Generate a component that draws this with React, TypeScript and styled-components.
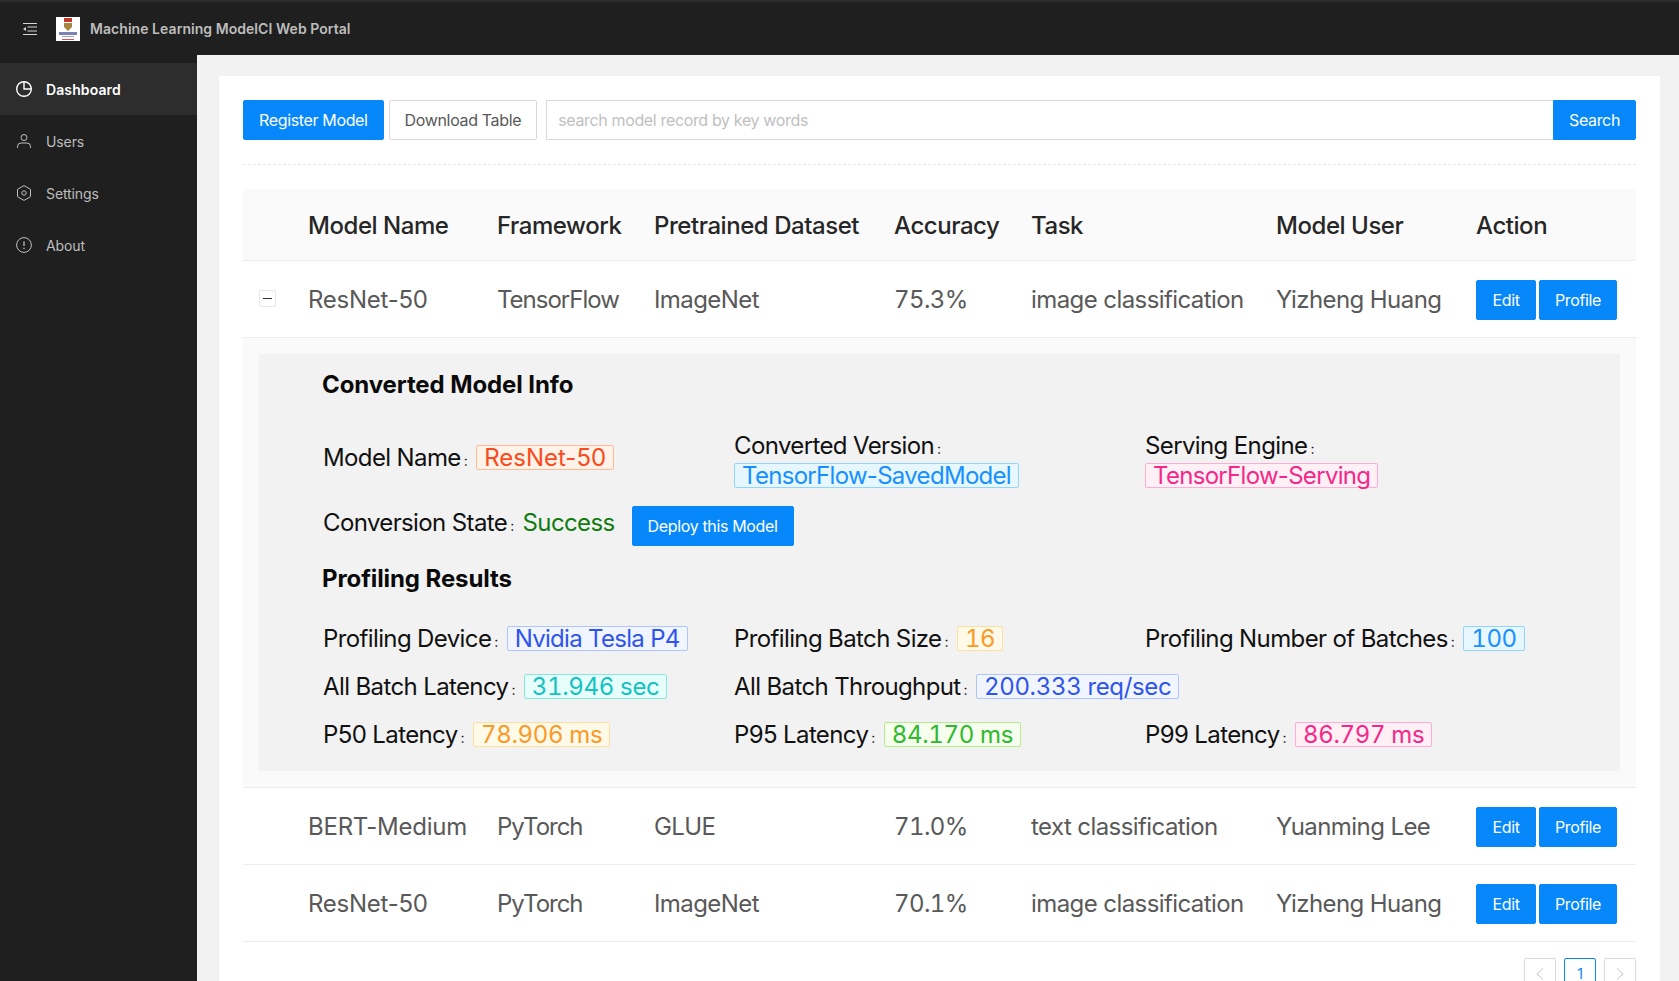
import styled, { createGlobalStyle } from "styled-components";

const GlobalStyle = createGlobalStyle`
  html, body {
    margin: 0;
    height: 100%;
    overflow: hidden;
    background: #f2f2f2;
    font-family: Inter, "Liberation Sans", sans-serif;
    font-kerning: normal;
    text-rendering: optimizeLegibility;
  }
  * {
    box-sizing: border-box;
  }
`;

const Page = styled.div`
  height: 981px;
  overflow: hidden;
  display: flex;
  flex-direction: column;
`;

const Header = styled.header`
  flex: none;
  height: 55px;
  display: flex;
  align-items: center;
  padding-left: 23px;
  background: #1f1f1f;
  border-top: 2px solid #2b2b30;
`;

const MenuFold = styled.svg`
  width: 14px;
  height: 12px;
  color: #d6d6d6;
`;

const LogoBox = styled.svg`
  width: 24px;
  height: 24px;
  margin-left: 19px;
  background: #fff;
`;

const Title = styled.div`
  margin-left: 10px;
  font-size: 14px;
  font-weight: 600;
  letter-spacing: 0.05px;
  color: #bdbdbd;
`;

const Body = styled.div`
  flex: 1;
  display: flex;
  min-height: 0;
`;

const Sider = styled.nav`
  flex: none;
  width: 197px;
  padding-top: 8px;
  background: #1f1f1f;
`;

const MenuItem = styled.div<{ $active?: boolean }>`
  height: 52px;
  display: flex;
  align-items: center;
  gap: 14px;
  padding-left: 16px;
  font-size: 14px;
  font-weight: ${(p) => (p.$active ? 600 : 400)};
  letter-spacing: ${(p) => (p.$active ? "0.1px" : "-0.1px")};
  color: ${(p) => (p.$active ? "#fff" : "#bdbdbd")};
  background: ${(p) => (p.$active ? "#2d2d2d" : "transparent")};
`;

const MenuIcon = styled.svg`
  width: 16px;
  height: 16px;
  flex: none;
`;

const Content = styled.main`
  flex: 1;
  padding: 21px 19px 0 22px;
  min-width: 0;
`;

const Card = styled.div`
  background: #fff;
  padding: 24px;
  height: 100%;
`;

const Toolbar = styled.div`
  display: flex;
  gap: 5px;
  padding-bottom: 24px;
  border-bottom: 1px dashed #e8e8e8;
  margin-bottom: 24px;
`;

const Button = styled.button<{ $ghost?: boolean }>`
  height: 40px;
  padding: 0 15px;
  flex: none;
  font-family: inherit;
  font-size: 16px;
  letter-spacing: -0.35px;
  color: ${(p) => (p.$ghost ? "#595959" : "#fff")};
  background: ${(p) => (p.$ghost ? "#fff" : "#0688fa")};
  border: 1px solid ${(p) => (p.$ghost ? "#d9d9d9" : "#0688fa")};
  border-radius: 2px;
`;

const SearchGroup = styled.div`
  flex: 1;
  display: flex;
  margin-left: 4px;
`;

const SearchInput = styled.div`
  flex: 1;
  height: 40px;
  display: flex;
  align-items: center;
  padding: 0 11px;
  font-size: 16px;
  letter-spacing: -0.35px;
  color: #bfbfbf;
  border: 1px solid #d9d9d9;
  border-right: 0;
  border-radius: 2px 0 0 2px;
`;

const SearchButton = styled(Button)`
  border-radius: 0 2px 2px 0;
`;

const Table = styled.table`
  width: 1393px;
  table-layout: fixed;
  border-collapse: collapse;
  font-size: 24px;
`;

const Th = styled.th`
  height: 71px;
  padding: 2px 16px 0;
  text-align: left;
  font-weight: 500;
  letter-spacing: -0.45px;
  color: #262626;
  background: #fafafa;
  border-bottom: 1px solid #ededed;
  white-space: nowrap;
`;

const Td = styled.td<{ $track?: number; $digits?: boolean }>`
  height: 77px;
  padding: 2px 16px 0;
  letter-spacing: ${(p) => p.$track ?? -0.58}px;
  font-feature-settings: ${(p) => (p.$digits ? '"tnum"' : "normal")};
  color: #595959;
  border-bottom: 1px solid #ededed;
  white-space: nowrap;
`;

const ExpandTd = styled(Td)`
  padding: 0 0 0 16px;
`;

const ExpandBox = styled.span`
  display: block;
  position: relative;
  width: 17px;
  height: 17px;
  background: #fff;
  border: 1px solid #e8e8e8;
  border-radius: 2px;
  &::after {
    content: "";
    position: absolute;
    left: 3px;
    right: 3px;
    top: 7px;
    height: 1px;
    background: #333;
  }
`;

const Actions = styled.div`
  display: flex;
  gap: 3px;
  button:first-child {
    width: 60px;
  }
  button:last-child {
    width: 78px;
  }
  button {
    padding: 0;
  }
`;

const ExpandedCell = styled.td`
  padding: 16px;
  background: #fafafa;
  border-bottom: 1px solid #ededed;
`;

const Panel = styled.div`
  height: 417px;
  padding: 15px 64px;
  background: #f2f2f2;
  color: #111;
`;

const SectionTitle = styled.div<{ $gap?: number }>`
  margin-top: ${(p) => p.$gap ?? 0}px;
  margin-left: -1px;
  font-size: 24px;
  font-weight: 700;
  line-height: 32px;
  letter-spacing: -0.1px;
  color: #0a0a0a;
`;

const InfoGrid = styled.div<{ $gap: number }>`
  display: grid;
  grid-template-columns: repeat(3, 411px);
  row-gap: 18px;
  margin-top: ${(p) => p.$gap}px;
`;

const Field = styled.div<{ $offset?: number; $span?: number }>`
  padding-top: ${(p) => p.$offset ?? 0}px;
  grid-column: span ${(p) => p.$span ?? 1};
  line-height: 30px;
  font-size: 24px;
  letter-spacing: -0.62px;
  white-space: nowrap;
`;

const Colon = styled.span`
  font-size: 14px;
  line-height: 1;
  margin: 0 9px 0 3px;
`;

const Tag = styled.span<{ $fg: string; $bg: string; $line: string; $digits?: boolean; $track?: number }>`
  display: inline-block;
  line-height: 23px;
  padding: 0 7px;
  letter-spacing: ${(p) => p.$track ?? (p.$digits ? -0.35 : -0.7)}px;
  font-feature-settings: ${(p) => (p.$digits ? '"tnum"' : "normal")};
  color: ${(p) => p.$fg};
  background: ${(p) => p.$bg};
  border: 1px solid ${(p) => p.$line};
  border-radius: 2px;
`;

const StateRow = styled.div`
  display: flex;
  align-items: flex-start;
  height: 40px;
  margin-top: 15px;
  font-size: 24px;
  line-height: 34px;
  letter-spacing: -0.62px;
`;

const SuccessText = styled.span`
  color: #107c10;
`;

const DeployButton = styled(Button)`
  margin-left: 17px;
`;

const Pagination = styled.div`
  display: flex;
  justify-content: flex-end;
  gap: 8px;
  margin-top: 16px;
`;

const PageBox = styled.div<{ $active?: boolean }>`
  width: 32px;
  height: 32px;
  display: flex;
  align-items: center;
  justify-content: center;
  font-size: 14px;
  color: ${(p) => (p.$active ? "#0688fa" : "#c4c4c4")};
  border: 1px solid ${(p) => (p.$active ? "#0688fa" : "#d9d9d9")};
  border-radius: 2px;
`;

const Chevron = styled.svg`
  width: 8px;
  height: 12px;
`;

const geek = { $fg: "#2f54eb", $bg: "#f0f5ff", $line: "#adc6ff" };
const cyan = { $fg: "#13c2c2", $bg: "#e6fffb", $line: "#87e8de" };
const orange = { $fg: "#fa9a28", $bg: "#fff9e8", $line: "#ffe0a0" };
const green = { $fg: "#30b92e", $bg: "#f6ffed", $line: "#b7eb8f" };
const magenta = { $fg: "#f5288a", $bg: "#fff0f6", $line: "#ffadd2" };
const volcano = { $fg: "#fa4a20", $bg: "#fff2e8", $line: "#ffbb96" };
const sky = { $fg: "#1890ff", $bg: "#e6f7ff", $line: "#91d5ff" };

const widths = [49, 189, 157, 240, 137, 245, 200, 176];

const rows = [
  ["BERT-Medium", "PyTorch", "GLUE", "71.0%", "text classification", "Yuanming Lee"],
  ["ResNet-50", "PyTorch", "ImageNet", "70.1%", "image classification", "Yizheng Huang"],
];

function RowCells({ cells }: { cells: string[] }) {
  return (
    <>
      <Td $track={-0.25}>{cells[0]}</Td>
      <Td $track={-1}>{cells[1]}</Td>
      <Td>{cells[2]}</Td>
      <Td $digits>{cells[3]}</Td>
      <Td>{cells[4]}</Td>
      <Td>{cells[5]}</Td>
      <Td>
        <Actions>
          <Button>Edit</Button>
          <Button>Profile</Button>
        </Actions>
      </Td>
    </>
  );
}

function App() {
  return (
    <Page>
      <GlobalStyle />
      <Header>
        <MenuFold viewBox="0 0 14 12" fill="none" stroke="currentColor" strokeWidth="1">
          <path d="M0 .5h14M4.5 4H14M4.5 8H14M0 11.5h14" />
          <path d="M3 4 0 6l3 2z" fill="currentColor" stroke="none" />
        </MenuFold>
        <LogoBox viewBox="0 0 24 24">
          <rect x="8" y="1" width="8" height="4" fill="#c0392b" />
          <path d="M8 6h8v4l-4 4-4-4z" fill="#a8843c" />
          <rect x="3" y="15" width="18" height="3" fill="#7b82b8" />
          <rect x="6" y="19" width="12" height="1" fill="#9aa0c8" />
          <rect x="6" y="22" width="12" height="1" fill="#d9534f" />
        </LogoBox>
        <Title>Machine Learning ModelCI Web Portal</Title>
      </Header>
      <Body>
        <Sider>
          <MenuItem $active>
            <MenuIcon viewBox="0 0 16 16" fill="none" stroke="currentColor" strokeWidth="1.4">
              <circle cx="8" cy="8" r="7.3" />
              <path d="M8 .7V8h7.3" />
            </MenuIcon>
            Dashboard
          </MenuItem>
          <MenuItem>
            <MenuIcon viewBox="0 0 16 16" fill="none" stroke="currentColor" strokeWidth="1">
              <circle cx="8" cy="4.5" r="3" />
              <path d="M1.5 15v-1.5a3.5 3.5 0 0 1 3.5-3.5h6a3.5 3.5 0 0 1 3.5 3.5V15" />
            </MenuIcon>
            Users
          </MenuItem>
          <MenuItem>
            <MenuIcon viewBox="0 0 16 16" fill="none" stroke="currentColor" strokeWidth="1">
              <path d="M8 .6l6.500 3.700v7.400L8 15.400l-6.500-3.700V4.300z" />
              <circle cx="8" cy="8" r="2.2" />
            </MenuIcon>
            Settings
          </MenuItem>
          <MenuItem>
            <MenuIcon viewBox="0 0 16 16" fill="none" stroke="currentColor" strokeWidth="1">
              <circle cx="8" cy="8" r="7.4" />
              <path d="M8 4.500v4.500M8 10.800v1.200" strokeWidth="1.3" />
            </MenuIcon>
            About
          </MenuItem>
        </Sider>
        <Content>
          <Card>
            <Toolbar>
              <Button>Register Model</Button>
              <Button $ghost>Download Table</Button>
              <SearchGroup>
                <SearchInput>search model record by key words</SearchInput>
                <SearchButton>Search</SearchButton>
              </SearchGroup>
            </Toolbar>
            <Table>
              <colgroup>
                {widths.map((w, i) => (
                  <col key={i} style={{ width: w }} />
                ))}
              </colgroup>
              <thead>
                <tr>
                  <Th />
                  <Th>Model Name</Th>
                  <Th>Framework</Th>
                  <Th>Pretrained Dataset</Th>
                  <Th>Accuracy</Th>
                  <Th>Task</Th>
                  <Th>Model User</Th>
                  <Th>Action</Th>
                </tr>
              </thead>
              <tbody>
                <tr>
                  <ExpandTd>
                    <ExpandBox />
                  </ExpandTd>
                  <RowCells
                    cells={["ResNet-50", "TensorFlow", "ImageNet", "75.3%", "image classification", "Yizheng Huang"]}
                  />
                </tr>
                <tr>
                  <ExpandedCell colSpan={8}>
                    <Panel>
                      <SectionTitle>Converted Model Info</SectionTitle>
                      <InfoGrid $gap={30}>
                        <Field $offset={12}>
                          Model Name<Colon>:</Colon>
                          <Tag {...volcano} $track={0}>
                            ResNet-50
                          </Tag>
                        </Field>
                        <Field>
                          Converted Version<Colon>:</Colon>
                          <br />
                          <Tag {...sky}>TensorFlow-SavedModel</Tag>
                        </Field>
                        <Field>
                          Serving Engine<Colon>:</Colon>
                          <br />
                          <Tag {...magenta}>TensorFlow-Serving</Tag>
                        </Field>
                      </InfoGrid>
                      <StateRow>
                        <span>
                          Conversion State<Colon>:</Colon>
                        </span>
                        <SuccessText>Success</SuccessText>
                        <DeployButton>Deploy this Model</DeployButton>
                      </StateRow>
                      <SectionTitle $gap={17}>Profiling Results</SectionTitle>
                      <InfoGrid $gap={29}>
                        <Field>
                          Profiling Device<Colon>:</Colon>
                          <Tag {...geek}>Nvidia Tesla P4</Tag>
                        </Field>
                        <Field>
                          Profiling Batch Size<Colon>:</Colon>
                          <Tag {...orange} $digits>
                            16
                          </Tag>
                        </Field>
                        <Field>
                          Profiling Number of Batches<Colon>:</Colon>
                          <Tag {...sky} $digits>
                            100
                          </Tag>
                        </Field>
                        <Field>
                          All Batch Latency<Colon>:</Colon>
                          <Tag {...cyan} $digits>
                            31.946 sec
                          </Tag>
                        </Field>
                        <Field $span={2}>
                          All Batch Throughput<Colon>:</Colon>
                          <Tag {...geek} $digits>
                            200.333 req/sec
                          </Tag>
                        </Field>
                        <Field>
                          P50 Latency<Colon>:</Colon>
                          <Tag {...orange} $digits>
                            78.906 ms
                          </Tag>
                        </Field>
                        <Field>
                          P95 Latency<Colon>:</Colon>
                          <Tag {...green} $digits>
                            84.170 ms
                          </Tag>
                        </Field>
                        <Field>
                          P99 Latency<Colon>:</Colon>
                          <Tag {...magenta} $digits>
                            86.797 ms
                          </Tag>
                        </Field>
                      </InfoGrid>
                    </Panel>
                  </ExpandedCell>
                </tr>
                {rows.map((r) => (
                  <tr key={r[0] + r[1]}>
                    <Td />
                    <RowCells cells={r} />
                  </tr>
                ))}
              </tbody>
            </Table>
            <Pagination>
              <PageBox>
                <Chevron viewBox="0 0 8 12" fill="none" stroke="currentColor" strokeWidth="1">
                  <path d="M7 .5 1 6l6 5.500" />
                </Chevron>
              </PageBox>
              <PageBox $active>1</PageBox>
              <PageBox>
                <Chevron viewBox="0 0 8 12" fill="none" stroke="currentColor" strokeWidth="1">
                  <path d="M1 .5 7 6l-6 5.500" />
                </Chevron>
              </PageBox>
            </Pagination>
          </Card>
        </Content>
      </Body>
    </Page>
  );
}

export default App;
